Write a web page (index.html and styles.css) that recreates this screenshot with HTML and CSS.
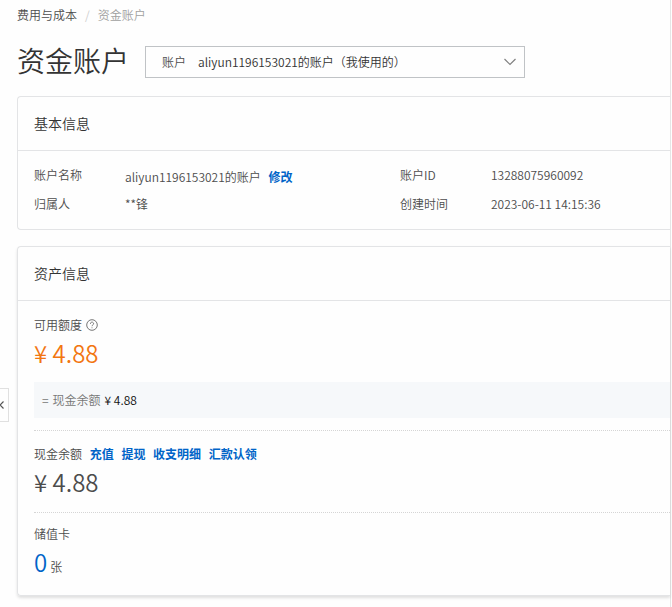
FILE: index.html
```
<!DOCTYPE html>
<html lang="zh-CN">
<head>
    <meta charset="UTF-8">
    <meta name="viewport" content="width=device-width, initial-scale=1.0">
    <title>资金账户</title>
    <link rel="stylesheet" href="styles.css">
</head>
<body>
    <button class="side-toggle" type="button" aria-label="展开菜单">
        <svg width="4" height="8" viewBox="0 0 4 8"><path d="M3.5 0.5 L0 4 L3.5 7.5" fill="none" stroke="#555" stroke-width="1.2"/></svg>
    </button>

    <main class="page">
        <nav class="breadcrumb">
            <a href="#">费用与成本</a>
            <span class="separator">/</span>
            <span class="current">资金账户</span>
        </nav>

        <header class="page-header">
            <h1>资金账户</h1>
            <div class="account-select">
                <label for="account">账户</label>
                <select id="account">
                    <option>aliyun1196153021的账户（我使用的）</option>
                </select>
                <svg class="arrow" width="12" height="8" viewBox="0 0 12 8"><path d="M0.5 1 L6 6.5 L11.5 1" fill="none" stroke="#808080" stroke-width="1.2"/></svg>
            </div>
        </header>

        <section class="card">
            <h2>基本信息</h2>
            <dl class="info">
                <dt>账户名称</dt>
                <dd class="with-action">aliyun1196153021的账户 <a class="action" href="#">修改</a></dd>
                <dt>账户ID</dt>
                <dd>13288075960092</dd>
                <dt>归属人</dt>
                <dd>**锋</dd>
                <dt>创建时间</dt>
                <dd>2023-06-11 14:15:36</dd>
            </dl>
        </section>

        <section class="card assets">
            <h2>资产信息</h2>
            <div class="asset">
                <div class="asset-label">
                    可用额度
                    <svg class="help" width="12" height="12" viewBox="0 0 12 12" fill="none" stroke="#666">
                        <circle cx="6" cy="6" r="5.3" stroke-width="0.9"/>
                        <path d="M4.4 4.8 C4.4 2.6 7.6 2.6 7.6 4.7 C7.6 5.9 6 5.9 6 7.2" stroke-width="0.9"/>
                        <circle cx="6" cy="8.8" r="0.5" fill="#666" stroke="none"/>
                    </svg>
                </div>
                <div class="amount available">¥ 4.88</div>
                <div class="formula"><span>=</span><span>现金余额</span><strong>¥ 4.88</strong></div>
            </div>
            <div class="asset">
                <div class="asset-label">
                    现金余额
                    <a class="action" href="#">充值</a>
                    <a class="action" href="#">提现</a>
                    <a class="action" href="#">收支明细</a>
                    <a class="action" href="#">汇款认领</a>
                </div>
                <div class="amount">¥ 4.88</div>
            </div>
            <div class="asset cards">
                <div class="asset-label">储值卡</div>
                <div class="amount"><a href="#">0</a><small>张</small></div>
            </div>
        </section>
    </main>
</body>
</html>
```

FILE: styles.css
```
* {
    box-sizing: border-box;
}
body {
    margin: 0;
    background-color: #fefefe;
    color: #4c4c4c;
    font-family: "Noto Sans CJK SC", sans-serif;
    font-size: 12px;
    font-weight: 350;
    line-height: 20px;
}
a {
    color: #0064c8;
    text-decoration: none;
}
h1, h2, dl, dd {
    margin: 0;
    font-weight: 350;
}
.page {
    min-height: 100vh;
    margin-right: 1px;
    padding: 5px 0 11px 17px;
    border-right: 1px solid #e5e5e5;
}
.breadcrumb {
    display: flex;
    gap: 8px;
}
.breadcrumb a {
    color: #4c4c4c;
}
.breadcrumb .separator {
    color: #ccc;
}
.breadcrumb .current {
    color: #a0a0a0;
}
.page-header {
    display: flex;
    align-items: flex-end;
    gap: 16px;
    margin: 17px 0 18px;
}
h1 {
    color: #333;
    font-size: 28px;
    line-height: 36px;
}
.account-select {
    display: flex;
    align-items: center;
    position: relative;
    width: 380px;
    height: 32px;
    border: 1px solid #c0c3c6;
}
.account-select label {
    padding-left: 16px;
}
.account-select select {
    flex: 1;
    height: 30px;
    padding: 0 32px 0 12px;
    border: none;
    background: none;
    color: #333;
    font: inherit;
    appearance: none;
}
.account-select .arrow {
    position: absolute;
    right: 8px;
    pointer-events: none;
}
.card {
    margin-bottom: 16px;
    border: 1px solid #e3e4e6;
    border-right: none;
    border-radius: 4px 0 0 4px;
}
h2 {
    padding: 16px;
    border-bottom: 1px solid #e3e4e6;
    color: #333;
    font-size: 14px;
    line-height: 21px;
}
.info {
    display: grid;
    grid-template-columns: 91px 275px 91px 1fr;
    row-gap: 5px;
    padding: 14px 0 15px 16px;
}
.info .with-action {
    line-height: 24px;
}
.action {
    margin-left: 5px;
    font-weight: 700;
}
.assets {
    margin-bottom: 0;
    box-shadow: 0 2px 3px rgba(0, 0, 0, 0.12);
}
.asset {
    margin-left: 16px;
    padding: 14px 0 12px;
}
.asset + .asset {
    padding: 13px 0 12px;
    border-top: 1px dotted #d5d5d5;
}
.asset.cards {
    padding: 11px 0 10px;
}
.help {
    margin-left: 1px;
    vertical-align: -1px;
}
.amount {
    font-size: 24px;
    line-height: 36px;
}
.available {
    color: #f27611;
}
.amount small {
    margin-left: 3px;
    font-size: 12px;
}
.formula {
    display: flex;
    gap: 4px;
    margin-top: 11px;
    padding: 8px;
    background-color: #f6f8fa;
    color: #777;
}
.formula strong {
    color: #111;
    font-weight: 350;
}
.side-toggle {
    display: flex;
    align-items: center;
    position: fixed;
    top: 388px;
    left: 0;
    width: 9px;
    height: 34px;
    padding: 0;
    border: 1px solid #e0e0e0;
    border-left: none;
    background-color: #fefefe;
}
```
